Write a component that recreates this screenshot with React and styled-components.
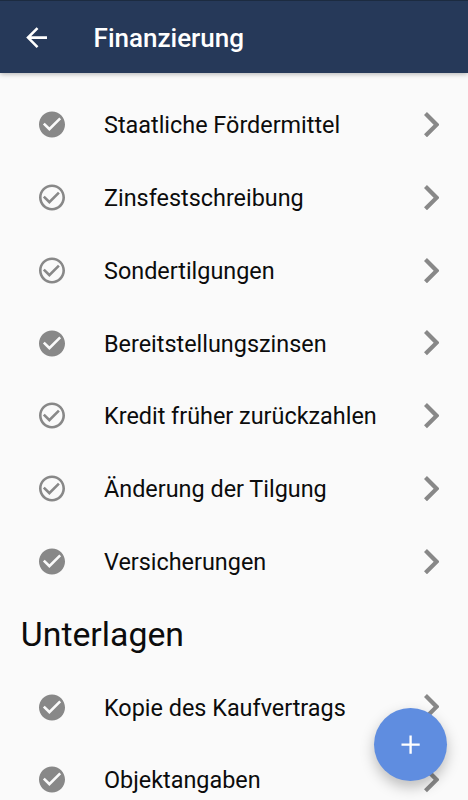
import styled, { createGlobalStyle } from "styled-components";

const financing = [
  { label: "Staatliche Fördermittel", done: true },
  { label: "Zinsfestschreibung", done: false },
  { label: "Sondertilgungen", done: false },
  { label: "Bereitstellungszinsen", done: true },
  { label: "Kredit früher zurückzahlen", done: false },
  { label: "Änderung der Tilgung", done: false },
  { label: "Versicherungen", done: true },
];

const documents = [
  { label: "Kopie des Kaufvertrags", done: true },
  { label: "Objektangaben", done: true },
];

const CHECK_FILLED =
  "M12 2C6.48 2 2 6.48 2 12s4.48 10 10 10 10-4.48 10-10S17.52 2 12 2zm-2 15l-5-5 1.41-1.41L10 14.17l7.59-7.59L19 8l-9 9z";
const CHECK_OUTLINE =
  "M16.59 7.58L10 14.17l-3.59-3.58L5 12l5 5 8-8zM12 2C6.48 2 2 6.48 2 12s4.48 10 10 10 10-4.48 10-10S17.52 2 12 2zm0 18c-4.42 0-8-3.58-8-8s3.58-8 8-8 8 3.58 8 8-3.58 8-8 8z";

function Item({ label, done }) {
  return (
    <Row>
      <CheckIcon viewBox="-0.3 0.1 24.6 23.8">
        <path d={done ? CHECK_FILLED : CHECK_OUTLINE} />
      </CheckIcon>
      <Label>{label}</Label>
      <Chevron viewBox="8.59 6 7.41 12">
        <path d="M10 6L8.59 7.41 13.17 12l-4.58 4.59L10 18l6-6z" />
      </Chevron>
    </Row>
  );
}

function App() {
  return (
    <Screen>
      <GlobalStyle />
      <Header>
        <BackButton aria-label="Zurück">
          <Icon viewBox="0 0 24 24">
            <path d="M20 11H7.83l5.59-5.59L12 4l-8 8 8 8 1.41-1.41L7.83 13H20v-2z" />
          </Icon>
        </BackButton>
        <Title>Finanzierung</Title>
      </Header>
      <List>
        {financing.map((item) => (
          <Item key={item.label} {...item} />
        ))}
        <SectionTitle>Unterlagen</SectionTitle>
        {documents.map((item) => (
          <Item key={item.label} {...item} />
        ))}
      </List>
      <AddButton aria-label="Hinzufügen">
        <Icon viewBox="0 0 24 24">
          <path d="M19 12.9h-6.1V19h-1.8v-6.1H5v-1.8h6.1V5h1.8v6.1H19z" />
        </Icon>
      </AddButton>
    </Screen>
  );
}

export default App;

const GlobalStyle = createGlobalStyle`
  * {
    box-sizing: border-box;
  }

  body {
    margin: 0;
    background-color: #fafafa;
    font-family: Roboto, sans-serif;
  }
`;

const Screen = styled.div`
  position: relative;
  display: flex;
  flex-direction: column;
  height: 800px;
  overflow: hidden;
  color: #0c0c0c;
`;

const Header = styled.header`
  display: flex;
  align-items: center;
  flex-shrink: 0;
  height: 73.3px;
  padding-left: 20.8px;
  border-top: 1px solid #1c2b40;
  background-color: #263959;
  color: #fff;
  box-shadow: 0 1px 5px rgba(0, 0, 0, 0.3);
`;

const BackButton = styled.button`
  display: flex;
  padding: 0;
  border: none;
  background: none;
  color: inherit;
`;

const Title = styled.h1`
  margin: 0 0 0 41.6px;
  padding-top: 2px;
  font-size: 26px;
  font-weight: 500;
  line-height: 32px;
`;

const List = styled.main`
  padding-top: 15px;
`;

const Row = styled.div`
  display: flex;
  align-items: center;
  height: 72.8px;
  padding: 0 28.7px 0 36px;
`;

const Icon = styled.svg`
  display: block;
  flex-shrink: 0;
  width: 31.2px;
  height: 31.2px;
  fill: currentColor;
`;

const CheckIcon = styled(Icon)`
  width: 32px;
  height: 31px;
  color: #888;
`;

const Label = styled.span`
  flex: 1;
  margin-left: 36px;
  padding-top: 1px;
  font-size: 23.4px;
  line-height: 28px;
  white-space: nowrap;
`;

const Chevron = styled.svg`
  width: 15.6px;
  height: 25.3px;
  fill: #888;
`;

const SectionTitle = styled.h2`
  display: flex;
  align-items: center;
  height: 72.8px;
  margin: 0;
  padding-left: 20.8px;
  font-size: 33.8px;
  font-weight: 400;
`;

const AddButton = styled.button`
  position: absolute;
  right: 20.8px;
  bottom: 18.9px;
  display: flex;
  align-items: center;
  justify-content: center;
  width: 72.8px;
  height: 72.8px;
  padding: 0;
  border: none;
  border-radius: 50%;
  background-color: #5f8de0;
  color: #fff;
  box-shadow: 0 6px 14px rgba(0, 0, 0, 0.25);
`;
